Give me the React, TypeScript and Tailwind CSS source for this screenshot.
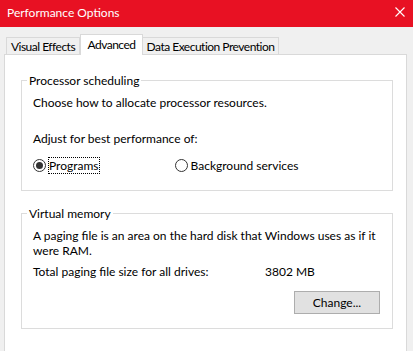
import React from "react";

const font = { fontFamily: 'Lato, "Liberation Sans", Arial, sans-serif' };

function Radio({ checked, label, focused }: { checked?: boolean; label: string; focused?: boolean }) {
  return (
    <div className="flex items-center h-[17px]">
      <span className="w-[13px] h-[13px] rounded-full border border-[#333333] bg-white flex items-center justify-center">
        {checked && <span className="w-[7px] h-[7px] rounded-full bg-[#333333]" />}
      </span>
      <span
        className={
          focused
            ? "ml-[2px] h-[17px] px-[1px] flex items-center outline-1 outline-dotted outline-black -outline-offset-1"
            : "ml-[3px] h-[17px] flex items-center"
        }
      >
        {label}
      </span>
    </div>
  );
}

function GroupBox({ title, children, className }: { title: string; children: React.ReactNode; className?: string }) {
  return (
    <div className={"w-[372px] border border-[#dcdcdc] flex flex-col " + (className ?? "")}>
      <span className="-mt-[8px] ml-[5px] px-[2px] w-fit bg-white leading-[15px]">{title}</span>
      {children}
    </div>
  );
}

export default function App() {
  return (
    <div className="w-[413px] h-[351px] bg-[#f0f0f0] overflow-hidden text-[12px] text-black flex flex-col" style={font}>
      {/* title bar */}
      <div className="h-[27px] shrink-0 bg-[#e81123] flex items-center justify-between pl-[7px] pr-[8px] pb-[3px] text-white">
        <span className="text-[12px] leading-[15px]">Performance Options</span>
        <svg width="10" height="10" viewBox="0 0 10 10">
          <path d="M0.5 0.5 L9.5 9.5 M9.5 0.5 L0.5 9.5" stroke="white" strokeWidth="1.1" />
        </svg>
      </div>

      {/* tabs */}
      <div className="flex items-end pl-[6px] pt-[7px] relative z-10 tracking-[-0.5px]">
        <div className="h-[17px] w-[74px] border border-b-0 border-[#d9d9d9] bg-[#f0f0f0] flex items-center justify-center leading-[15px]">
          Visual Effects
        </div>
        <div className="h-[21px] w-[63px] border border-b-0 border-[#d9d9d9] bg-white -mb-px flex items-center justify-center pb-[2px] leading-[15px]">
          Advanced
        </div>
        <div className="h-[17px] w-[136px] border border-b-0 border-l-0 border-[#d9d9d9] bg-[#f0f0f0] flex items-center justify-center leading-[15px]">
          Data Execution Prevention
        </div>
      </div>

      {/* panel */}
      <div className="ml-[4px] w-[403px] flex-1 border border-b-0 border-[#d9d9d9] bg-white pl-[16px] pt-[25px] leading-[15px]">
        <GroupBox title="Processor scheduling">
          <div className="pl-[11px] pb-[16px] flex flex-col">
            <p className="mt-[7px]">Choose how to allocate processor resources.</p>
            <p className="mt-[21px]">Adjust for best performance of:</p>
            <div className="mt-[11px] flex">
              <Radio checked focused label="Programs" />
              <div className="ml-[75px]">
                <Radio label="Background services" />
              </div>
            </div>
          </div>
        </GroupBox>

        <GroupBox title="Virtual memory" className="mt-[22px]">
          <div className="pl-[11px] pr-[12px] pb-[14px] flex flex-col">
            <p className="mt-[7px]">
              A paging file is an area on the hard disk that Windows uses as if it
              <br />
              were RAM.
            </p>
            <div className="mt-[6px] flex">
              <span className="w-[232px]">Total paging file size for all drives:</span>
              <span>3802 MB</span>
            </div>
            <div className="mt-[12px] flex justify-end">
              <button className="w-[86px] h-[23px] border border-[#adadad] bg-[#e1e1e1] flex items-center justify-center">
                Change...
              </button>
            </div>
          </div>
        </GroupBox>
      </div>
    </div>
  );
}
